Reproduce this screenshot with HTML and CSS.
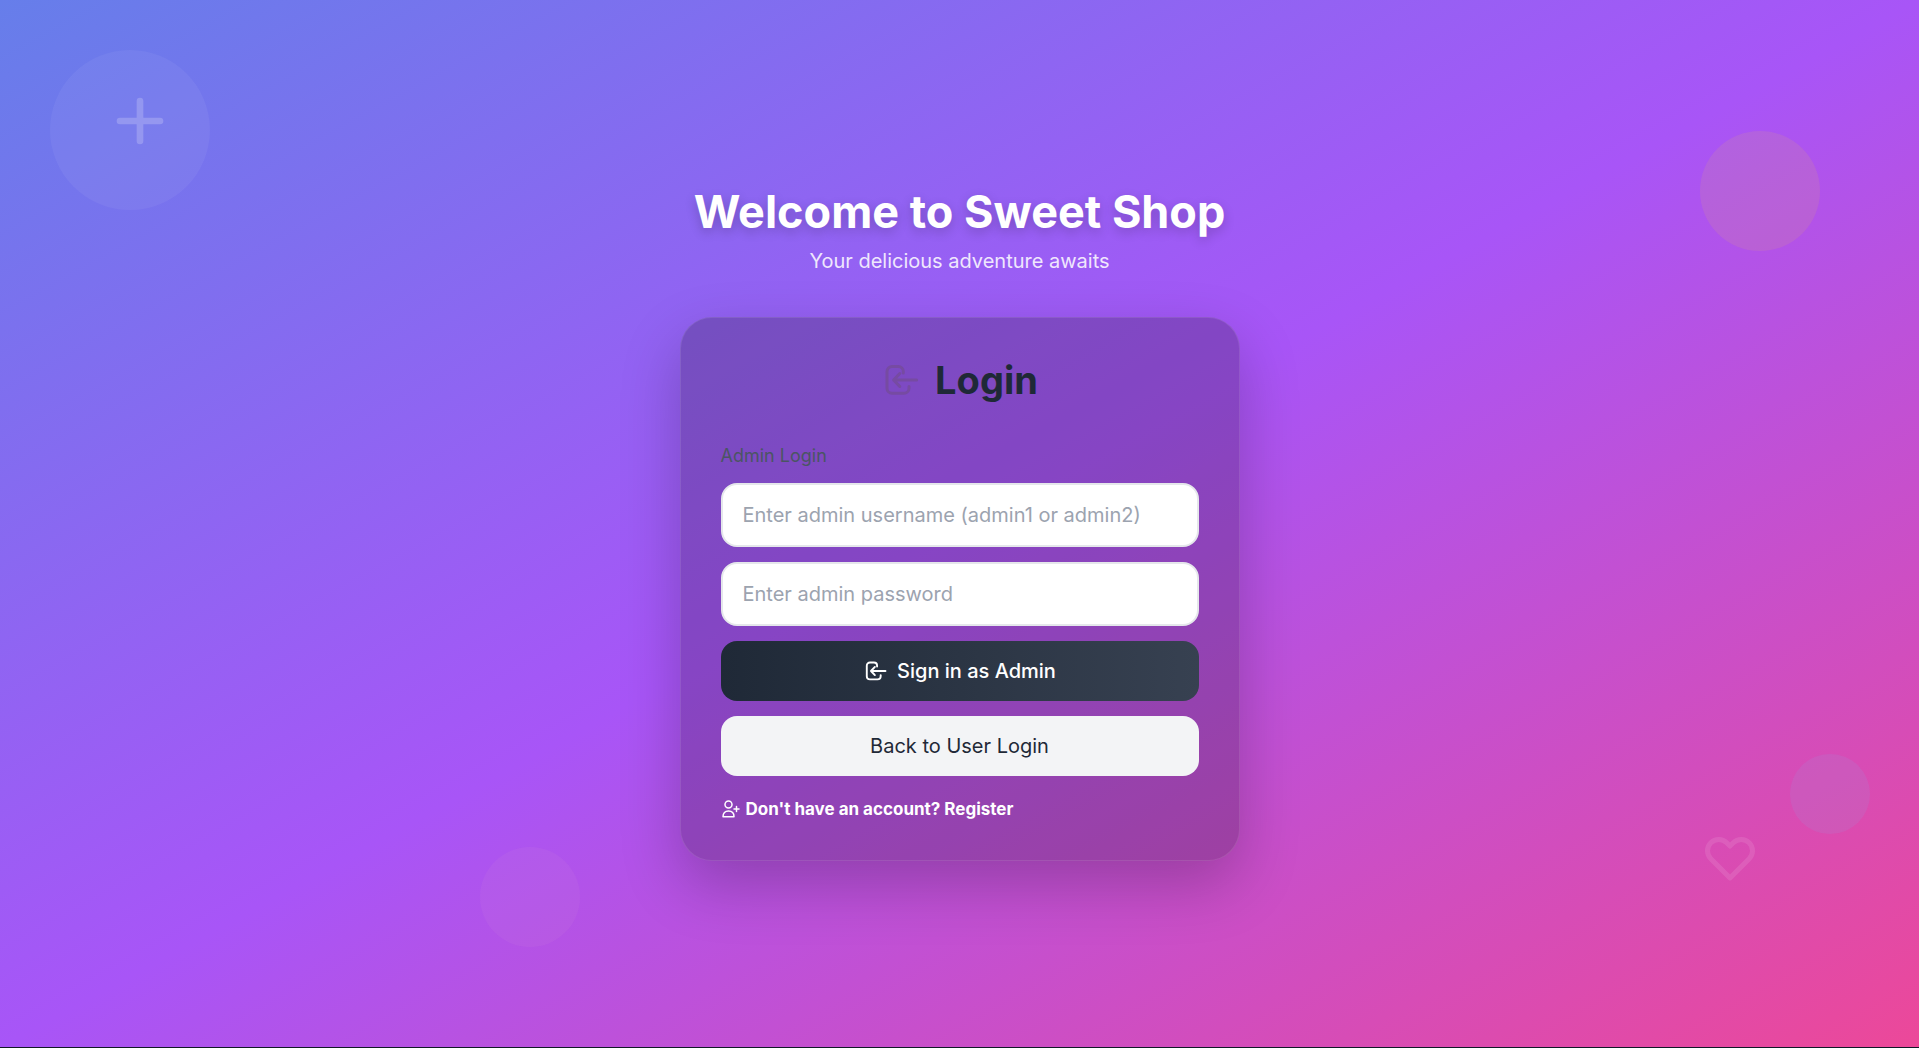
FILE: index.html
```html
<!DOCTYPE html>
<html lang="en">
<head>
<meta charset="utf-8">
<meta name="viewport" content="width=device-width, initial-scale=1">
<title>Sweet Shop – Admin Login</title>
<link rel="stylesheet" href="styles.css">
</head>
<body>
<svg class="sprite" aria-hidden="true">
  <symbol id="login" viewBox="-3 -3 38 38" fill="none" stroke="currentColor" stroke-width="3" stroke-linecap="round" stroke-linejoin="round">
    <path d="M19.300 9V7.500a5 5 0 0 0-5-5H8a5 5 0 0 0-5 5v16.700a5 5 0 0 0 5 5h12a5 5 0 0 0 5-5V22.500"/>
    <path d="M32.600 16H9.600M15.800 9.500l-6.200 6.500 6.200 6.500"/>
  </symbol>
</svg>
<div class="page">
  <div class="decor" aria-hidden="true">
    <span class="circle circle-a"></span>
    <span class="circle circle-b"></span>
    <span class="circle circle-c"></span>
    <span class="circle circle-d"></span>
    <svg class="plus" viewBox="0 0 24 24"><path d="M12 6v12m6-6H6"/></svg>
    <svg class="heart" viewBox="0 0 24 24"><path d="M4.318 6.318a4.500 4.500 0 0 0 0 6.364L12 20.364l7.682-7.682a4.500 4.500 0 0 0-6.364-6.364L12 7.636l-1.318-1.318a4.500 4.500 0 0 0-6.364 0z"/></svg>
  </div>
  <main class="content">
    <header class="hero">
      <h1>Welcome to Sweet Shop</h1>
      <p>Your delicious adventure awaits</p>
    </header>
    <section class="card">
      <h2><svg class="title-icon" aria-hidden="true"><use href="#login"/></svg>Login</h2>
      <form class="form">
        <label class="form-label" for="username">Admin Login</label>
        <input id="username" type="text" placeholder="Enter admin username (admin1 or admin2)">
        <input type="password" aria-label="Admin password" placeholder="Enter admin password">
        <button class="btn btn-dark" type="submit"><svg class="btn-icon" aria-hidden="true"><use href="#login"/></svg>Sign in as Admin</button>
        <button class="btn btn-light" type="button">Back to User Login</button>
      </form>
      <a class="register" href="#register">
        <svg class="user-icon" viewBox="-1 0 19 18" aria-hidden="true"><circle cx="6.500" cy="4.500" r="3.500"/><path d="M1 16.800c0-3.800 2-5.800 5.500-5.800s5.500 2 5.500 5.800zM14.500 6.500v5M12 9h5"/></svg>
        Don't have an account? Register
      </a>
    </section>
  </main>
</div>
</body>
</html>
```
FILE: styles.css
```css
* { box-sizing: border-box; }

html { background: #111827; }

body {
  margin: 0;
  font-family: Inter, "Liberation Sans", sans-serif;
  color: #1f2937;
}

.sprite { position: absolute; width: 0; height: 0; }

.page {
  position: relative;
  display: flex;
  align-items: center;
  justify-content: center;
  min-height: calc(100vh - 1px);
  padding: 24px;
  overflow: hidden;
  background: linear-gradient(to bottom right, #667eea, #a855f7, #ec4899);
}

.decor { position: absolute; inset: 0; }
.circle { position: absolute; border-radius: 50%; }
.circle-a { left: 50px; top: 50px; width: 160px; height: 160px; background: rgba(255, 255, 255, .05); }
.circle-b { right: 99px; top: 131px; width: 120px; height: 120px; background: rgba(255, 220, 50, .1); }
.circle-c { left: 480px; bottom: 100px; width: 100px; height: 100px; background: rgba(220, 150, 220, .1); }
.circle-d { right: 49px; bottom: 213px; width: 80px; height: 80px; background: rgba(147, 160, 230, .15); }
.plus, .heart {
  position: absolute;
  fill: none;
  stroke: #fff;
  stroke-width: 2;
  stroke-linecap: round;
  stroke-linejoin: round;
}
.plus { left: 100px; top: 81px; width: 80px; height: 80px; opacity: .2; }
.heart { right: 159px; bottom: 160px; width: 60px; height: 60px; opacity: .1; }

.content { position: relative; width: 100%; max-width: 560px; }

.hero { margin-bottom: 40px; text-align: center; color: #fff; }
.hero h1 {
  margin: 0 0 8px;
  font-size: 45px;
  line-height: 50px;
  font-weight: 700;
  text-shadow: 0 4px 12px rgba(0, 0, 0, .2);
  white-space: nowrap;
}
.hero p { margin: 0; font-size: 20px; line-height: 32px; opacity: .85; }

.card {
  padding: 40px;
  border: 1px solid rgba(255, 255, 255, .1);
  border-radius: 32px;
  background: rgba(15, 12, 20, .22);
  box-shadow: 0 24px 60px rgba(0, 0, 0, .22);
}
.card h2 {
  display: flex;
  align-items: center;
  justify-content: center;
  gap: 16px;
  margin: 0 0 42px;
  font-size: 38px;
  line-height: 44px;
  font-weight: 700;
}
.title-icon { width: 38px; height: 38px; color: #764ba2; }

.form { display: flex; flex-direction: column; gap: 15px; }
.form-label { font-size: 18px; line-height: 24px; color: #4b5563; }
.form input {
  width: 100%;
  height: 64px;
  padding: 0 20px;
  border: 2px solid #e5e7eb;
  border-radius: 16px;
  background: #fff;
  font: 400 20px Inter, "Liberation Sans", sans-serif;
  color: #1f2937;
}
.form input::placeholder { color: #9ca3af; opacity: 1; }

.btn {
  display: flex;
  align-items: center;
  justify-content: center;
  gap: 10px;
  height: 60px;
  border: 0;
  border-radius: 16px;
  font: 500 20px Inter, "Liberation Sans", sans-serif;
  cursor: pointer;
}
.btn-dark { background: linear-gradient(90deg, #1f2937, #374151); color: #fff; }
.btn-light { background: #f3f4f6; color: #1f2937; font-weight: 400; }
.btn-icon { width: 24px; height: 24px; }

.register {
  display: flex;
  align-items: center;
  gap: 6px;
  width: fit-content;
  margin-top: 22px;
  font-size: 17px;
  line-height: 22px;
  font-weight: 700;
  color: #fff;
  text-decoration: none;
}
.user-icon {
  width: 19px;
  height: 18px;
  fill: none;
  stroke: currentColor;
  stroke-width: 1.500;
  stroke-linecap: round;
  stroke-linejoin: round;
}
```
